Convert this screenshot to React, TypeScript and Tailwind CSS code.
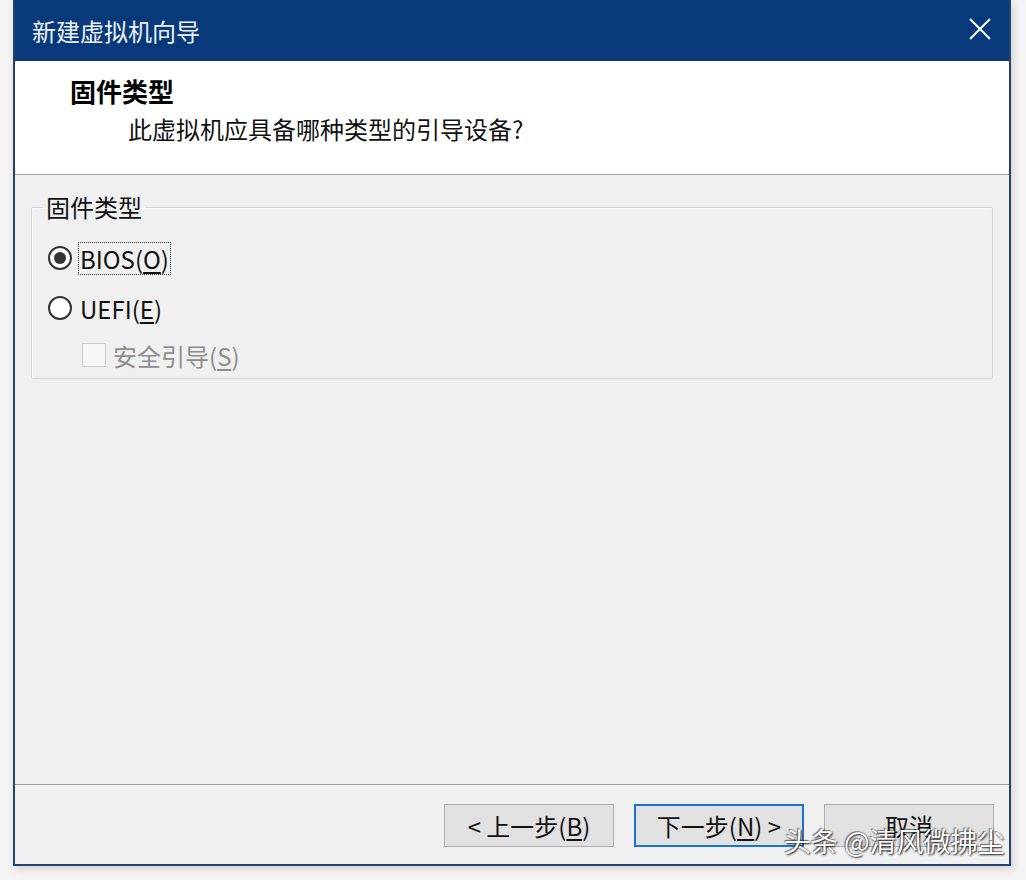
import React from "react";

const font = "font-['Microsoft_YaHei','Noto_Sans_CJK_SC',sans-serif]";

const Radio: React.FC<{ checked?: boolean }> = ({ checked }) => (
  <span className="w-[24px] h-[24px] rounded-full border-2 border-[#333] bg-white flex items-center justify-center shrink-0">
    {checked && <span className="w-[12px] h-[12px] rounded-full bg-[#333]" />}
  </span>
);

const WizardButton: React.FC<{ focused?: boolean; children: React.ReactNode }> = ({ focused, children }) => (
  <button
    className={
      focused
        ? "w-[170px] h-[43px] bg-[#e1e1e1] border-2 border-[#1a73d1] text-[24px] text-[#111] flex items-center justify-center"
        : "w-[170px] h-[43px] bg-[#e1e1e1] border border-[#adadad] text-[24px] text-[#111] flex items-center justify-center"
    }
  >
    {children}
  </button>
);

export default function App() {
  return (
    <div className={`relative w-[1026px] h-[880px] bg-[#f4f4f4] pl-[13px] overflow-hidden ${font}`}>
      {/* Window */}
      <div className="w-[998px] h-[866px] flex flex-col border-x-2 border-b-2 border-[#23426c] bg-[#f0f0f0] shadow-[2px_3px_8px_rgba(0,0,0,0.15)]">
        {/* Title bar */}
        <div className="h-[61px] shrink-0 bg-[#083a7b] flex items-center justify-between pl-[17px] pr-[18px]">
          <span className="text-[24px] text-[#eef2f8] leading-none">新建虚拟机向导</span>
          <svg width="22" height="22" viewBox="0 0 22 22" className="-mt-[3px]">
            <path d="M1 1 L21 21 M21 1 L1 21" stroke="#ffffff" strokeWidth="2" fill="none" />
          </svg>
        </div>

        {/* Header */}
        <div className="h-[114px] shrink-0 bg-white border-b border-[#a0a0a0] pt-[13px]">
          <div className="pl-[55px] text-[26px] font-bold leading-[34px] text-black">固件类型</div>
          <div className="pl-[113px] mt-[4px] text-[24px] leading-[34px] text-[#111]">此虚拟机应具备哪种类型的引导设备?</div>
        </div>

        {/* Body */}
        <div className="flex-1 pt-[17px] px-[16px] border-b border-[#a0a0a0]">
          <fieldset className="border border-[#d6d6d6] rounded-[2px] pl-[16px] pr-[16px] pb-[6px] shadow-[inset_1px_1px_0_#ffffff]">
            <legend className="-ml-[5px] px-[3px] text-[24px] leading-[30px] text-[#111]">固件类型</legend>
            <div className="flex flex-col pt-[19px]">
              <div className="h-[34px] flex items-center">
                <Radio checked />
                <span className="ml-[6px] px-[1px] border border-dotted border-[#333] text-[24px] leading-[31px] text-[#111]">
                  BIOS(<span className="underline underline-offset-[3px]">O</span>)
                </span>
              </div>
              <div className="h-[34px] mt-[16px] flex items-center">
                <Radio />
                <span className="ml-[8px] text-[24px] leading-[31px] text-[#111]">
                  UEFI(<span className="underline underline-offset-[3px]">E</span>)
                </span>
              </div>
              <div className="h-[34px] mt-[13px] flex items-center pl-[34px]">
                <span className="w-[24px] h-[24px] border border-[#cccccc] bg-[#f7f7f7] shrink-0" />
                <span className="ml-[7px] text-[24px] leading-[31px] text-[#8d8d8d]">
                  安全引导(<span className="underline underline-offset-[3px]">S</span>)
                </span>
              </div>
            </div>
          </fieldset>
        </div>

        {/* Footer */}
        <div className="h-[79px] shrink-0 flex justify-end items-start gap-[20px] pt-[19px] pr-[15px]">
          <WizardButton>
            &lt; 上一步(<span className="underline underline-offset-[3px]">B</span>)
          </WizardButton>
          <WizardButton focused>
            下一步(<span className="underline underline-offset-[3px]">N</span>) &gt;
          </WizardButton>
          <WizardButton>取消</WizardButton>
        </div>
      </div>

      {/* Watermark */}
      <div className="absolute left-[784px] top-[824px] text-[27px] leading-[34px] text-white whitespace-nowrap [text-shadow:1px_1px_2px_rgba(0,0,0,0.9),-1px_-1px_1px_rgba(0,0,0,0.5)]">
        头条 @清风微拂尘
      </div>
    </div>
  );
}
